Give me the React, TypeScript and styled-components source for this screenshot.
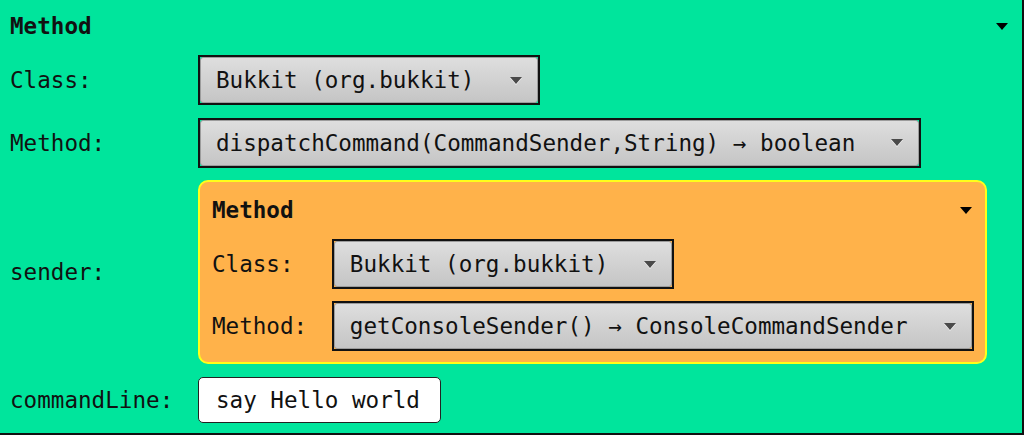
import React from "react";
import styled, { createGlobalStyle } from "styled-components";

const Global = createGlobalStyle`
  html, body { margin: 0; padding: 0; background: #00e59c; }
  body { font-family: "DejaVu Sans Mono", "Liberation Mono", monospace; }
  * { box-sizing: border-box; }
`;

const Panel = styled.div`
  width: 1024px;
  height: 435px;
  background: #00e59c;
  border-right: 2px solid #111;
  border-bottom: 2px solid #111;
  padding: 10px 14px 11px 10px;
  font-family: "DejaVu Sans Mono", "Liberation Mono", monospace;
  font-size: 22.6px;
  color: #111;
`;

const Header = styled.div`
  height: 32px;
  display: flex;
  align-items: center;
  justify-content: space-between;
  margin-bottom: 13px;
`;

const Title = styled.span`
  font-weight: bold;
`;

const Caret = styled.span<{ $mr?: number }>`
  width: 0;
  height: 0;
  border-left: 6.5px solid transparent;
  border-right: 6.5px solid transparent;
  border-top: 7px solid #000;
  margin-right: ${(p) => p.$mr ?? 0}px;
`;

const Form = styled.div<{ $gap: number }>`
  display: grid;
  grid-template-columns: max-content 1fr;
  column-gap: 24.7px;
  row-gap: ${(p) => p.$gap}px;
  align-items: center;
`;

const Label = styled.div`
  white-space: pre;
`;

const Cell = styled.div<{ $pr?: number }>`
  display: flex;
  padding-right: ${(p) => p.$pr ?? 0}px;
`;

const Select = styled.div`
  border: 2px solid #111;
  display: flex;
`;

const Face = styled.div`
  height: 46px;
  display: flex;
  align-items: center;
  padding: 0 15px 0 15px;
  border: 1px solid #9c9c9c;
  border-radius: 3px;
  background: linear-gradient(#dedede, #c5c5c5);
  white-space: pre;
`;

const SelectArrow = styled.span`
  margin-left: 36px;
  width: 0;
  height: 0;
  border-left: 6.5px solid transparent;
  border-right: 6.5px solid transparent;
  border-top: 7px solid #4a4a4a;
  filter: drop-shadow(0 1px 0 #f4f4f4);
`;

const Nested = styled.div`
  flex: 1;
  background: #ffb24a;
  border: 2px solid #ffff1a;
  border-radius: 10px;
  padding: 12px 11px 11px 12px;
`;

const TextInput = styled.div`
  width: 243px;
  height: 46px;
  display: flex;
  align-items: center;
  padding-left: 17px;
  background: #fff;
  border: 1.5px solid #222;
  border-radius: 5px;
  white-space: pre;
`;

const Dropdown = ({ value }: { value: string }) => (
  <Select>
    <Face>
      {value}
      <SelectArrow />
    </Face>
  </Select>
);

export default function App() {
  return (
    <>
      <Global />
      <Panel>
        <Header>
          <Title>Method</Title>
          <Caret />
        </Header>
        <Form $gap={12.5}>
          <Label>Class:</Label>
          <Cell>
            <Dropdown value="Bukkit (org.bukkit)" />
          </Cell>
          <Label>Method:</Label>
          <Cell>
            <Dropdown value="dispatchCommand(CommandSender,String) → boolean" />
          </Cell>
          <Label>sender:</Label>
          <Cell $pr={23}>
            <Nested>
              <Header>
                <Title>Method</Title>
                <Caret $mr={2} />
              </Header>
              <Form $gap={12}>
                <Label>Class:</Label>
                <Cell>
                  <Dropdown value="Bukkit (org.bukkit)" />
                </Cell>
                <Label>Method:</Label>
                <Cell>
                  <Dropdown value="getConsoleSender() → ConsoleCommandSender" />
                </Cell>
              </Form>
            </Nested>
          </Cell>
          <Label>commandLine:</Label>
          <Cell>
            <TextInput>say Hello world</TextInput>
          </Cell>
        </Form>
      </Panel>
    </>
  );
}
